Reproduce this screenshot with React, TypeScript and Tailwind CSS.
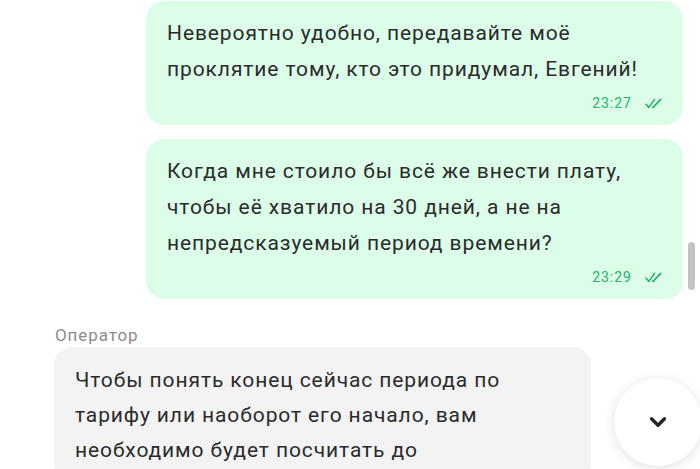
import { ChevronDown } from 'lucide-react';

type Msg = { text: string[]; time: string };

const outgoing: Msg[] = [
	{
		text: ['Невероятно удобно, передавайте моё', 'проклятие тому, кто это придумал, Евгений!'],
		time: '23:27',
	},
	{
		text: [
			'Когда мне стоило бы всё же внести плату,',
			'чтобы её хватило на 30 дней, а не на',
			'непредсказуемый период времени?',
		],
		time: '23:29',
	},
];

function DoubleCheck() {
	return (
		<svg width="17" height="11" viewBox="0 0 17 11" fill="none" stroke="#22b566" strokeWidth="1.6" strokeLinecap="round" strokeLinejoin="round">
			<path d="M1 6.2 L3.8 9.4 L9.6 1.4" />
			<path d="M7.6 9.2 L8.2 9.4 L15.6 1.4" />
		</svg>
	);
}

function Outgoing({ msg }: { msg: Msg }) {
	return (
		<div className="flex justify-end">
			<div className="w-[537px] rounded-[18px] bg-[#dcfde8] pt-[14px] pb-[13px] pl-[21px] pr-[21px]">
				<div className="text-[21px] leading-[36px] tracking-[0.9px] text-[#2b2b2b]">
					{msg.text.map((line) => (
						<div key={line}>{line}</div>
					))}
				</div>
				<div className="mt-[7px] flex items-center justify-end gap-[13px]">
					<span className="text-[14px] leading-[18px] tracking-[1px] text-[#22b566]">{msg.time}</span>
					<DoubleCheck />
				</div>
			</div>
		</div>
	);
}

export default function App() {
	return (
		<div className="relative h-[469px] w-[700px] overflow-hidden bg-white font-[family-name:'Roboto',sans-serif]">
			<div className="flex flex-col gap-[14px] pt-[1px] pr-[17px]">
				{outgoing.map((m) => (
					<Outgoing key={m.time} msg={m} />
				))}
			</div>

			<div className="mt-[26px] pl-[54px]">
				<div className="pl-[1px] text-[17px] leading-[20px] tracking-[0.9px] text-[#8c8c8c]">Оператор</div>
				<div className="mt-[2px] w-[537px] rounded-[18px] bg-[#f3f3f3] pt-[16px] pb-[14px] pl-[21px] pr-[24px]">
					<div className="text-[21px] leading-[35px] tracking-[0.9px] text-[#2b2b2b]">
						<div>Чтобы понять конец сейчас периода по</div>
						<div>тарифу или наоборот его начало, вам</div>
						<div>необходимо будет посчитать до</div>
					</div>
				</div>
			</div>

			{/* scrollbar thumb */}
			<div className="absolute left-[688px] top-[242px] h-[48px] w-[7px] rounded-full bg-[#c4c4c4]" />

			{/* scroll-down button */}
			<button className="absolute left-[614px] top-[378px] flex h-[88px] w-[88px] items-center justify-center rounded-full bg-white shadow-[0_2px_12px_rgba(0,0,0,0.12)]">
				<ChevronDown size={26} strokeWidth={3} color="#222" />
			</button>
		</div>
	);
}
